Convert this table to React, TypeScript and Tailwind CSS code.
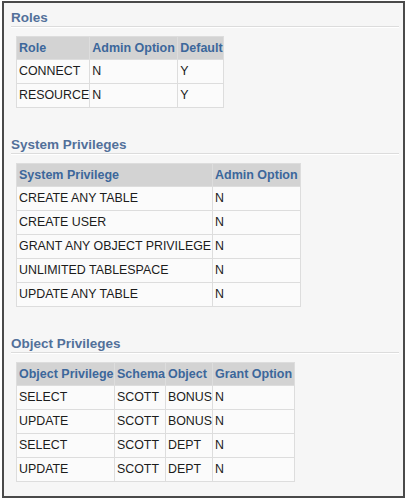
import React from "react"

type Col = { label: string; w: string }

const roles = {
  cols: [
    { label: "Role", w: "w-[72px]" },
    { label: "Admin Option", w: "w-[87px]" },
    { label: "Default", w: "w-[45px]" },
  ] as Col[],
  rows: [
    ["CONNECT", "N", "Y"],
    ["RESOURCE", "N", "Y"],
  ],
}

const sysPrivs = {
  cols: [
    { label: "System Privilege", w: "w-[195px]" },
    { label: "Admin Option", w: "w-[87px]" },
  ] as Col[],
  rows: [
    ["CREATE ANY TABLE", "N"],
    ["CREATE USER", "N"],
    ["GRANT ANY OBJECT PRIVILEGE", "N"],
    ["UNLIMITED TABLESPACE", "N"],
    ["UPDATE ANY TABLE", "N"],
  ],
}

const objPrivs = {
  cols: [
    { label: "Object Privilege", w: "w-[97px]" },
    { label: "Schema", w: "w-[49px]" },
    { label: "Object", w: "w-[46px]" },
    { label: "Grant Option", w: "w-[81px]" },
  ] as Col[],
  rows: [
    ["SELECT", "SCOTT", "BONUS", "N"],
    ["UPDATE", "SCOTT", "BONUS", "N"],
    ["SELECT", "SCOTT", "DEPT", "N"],
    ["UPDATE", "SCOTT", "DEPT", "N"],
  ],
}

function Section({ title, cols, rows, top }: { title: string; cols: Col[]; rows: string[][]; top: string }) {
  return (
    <div className={top}>
      {/* heading with faint rule */}
      <div className="ml-[7px] mr-[4px] h-[23px] flex items-end pb-[1px] border-b border-[#dcdcdc] shadow-[0_1px_0_#ffffff]">
        <h2 className="text-[13.5px] leading-[14px] font-bold text-[#52709a]">{title}</h2>
      </div>
      <table className="mt-[9px] ml-[12px] border-separate border-spacing-[1px] bg-[#dddddd]">
        <thead>
          <tr>
            {cols.map((c) => (
              <th
                key={c.label}
                className={`${c.w} h-[22px] p-0 pl-[2px] text-left align-middle bg-[#d3d3d3] text-[#3c679b] text-[12.5px] font-bold whitespace-nowrap`}
              >
                {c.label}
              </th>
            ))}
          </tr>
        </thead>
        <tbody>
          {rows.map((r, i) => (
            <tr key={i}>
              {r.map((v, j) => (
                <td
                  key={j}
                  className="h-[23px] p-0 pl-[2px] align-middle bg-[#fbfbfb] text-[#1c1c1c] text-[12.4px] whitespace-nowrap"
                >
                  {v}
                </td>
              ))}
            </tr>
          ))}
        </tbody>
      </table>
    </div>
  )
}

export default function App() {
  return (
    <div className="w-[408px] h-[501px] bg-white pt-[1px] pl-[2px] font-['Liberation_Sans',Arial,sans-serif]">
      <div className="w-[403px] h-[497px] border-2 border-[#4a4a4a] bg-[#f6f6f6] pt-[1px]">
        <Section title="Roles" cols={roles.cols} rows={roles.rows} top="mt-0" />
        <Section title="System Privileges" cols={sysPrivs.cols} rows={sysPrivs.rows} top="mt-[23px]" />
        <Section title="Object Privileges" cols={objPrivs.cols} rows={objPrivs.rows} top="mt-[23px]" />
      </div>
    </div>
  )
}
